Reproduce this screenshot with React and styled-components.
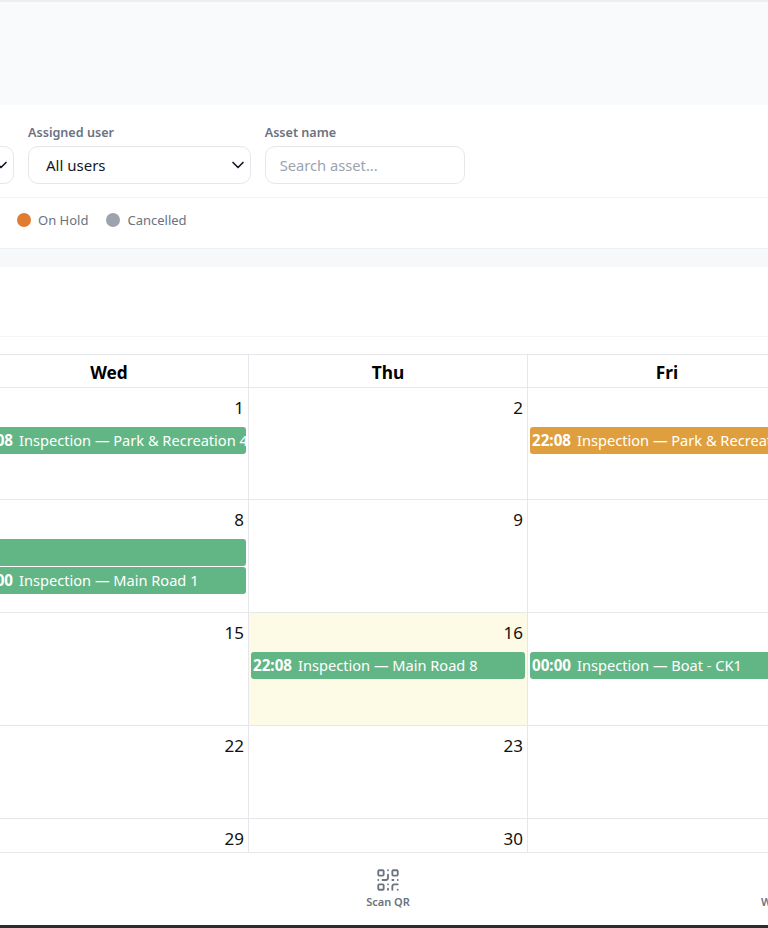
import React from 'react'
import styled, { createGlobalStyle } from 'styled-components'
import { ChevronDown, QrCode } from 'lucide-react'

const GlobalStyle = createGlobalStyle`
  html, body {
    margin: 0;
    height: 100%;
    overflow: hidden;
    background: #fff;
    font-family: "Noto Sans", "Open Sans", sans-serif;
  }
`

const COLUMN = 279

const Page = styled.div`
  width: 768px;
  height: 928px;
  overflow: hidden;
  display: flex;
  flex-direction: column;
  border-top: 2px solid #eceef1;
  border-bottom: 3px solid #2a2c30;
  box-sizing: border-box;
  background: #fff;
`

const Banner = styled.div`
  height: 103px;
  flex: none;
  background: #f9fafb;
`

const FilterCard = styled.section`
  flex: none;
  height: 144px;
  box-sizing: border-box;
  background: #fff;
  border-bottom: 1px solid #eef0f2;
  box-shadow: 0 1px 2px rgba(0, 0, 0, 0.05);
  display: flex;
  flex-direction: column;
`

const FilterRow = styled.div`
  height: 93px;
  flex: none;
  box-sizing: border-box;
  padding-top: 19px;
  display: flex;
  gap: 14px;
  border-bottom: 1px solid #f3f4f6;
`

const Field = styled.label`
  display: flex;
  flex-direction: column;
  gap: 5px;
  flex: none;
  width: ${p => p.$width}px;
  margin-left: ${p => p.$offset || 0}px;
`

const FieldLabel = styled.span`
  font-size: 12.6px;
  line-height: 17px;
  height: 17px;
  font-weight: 600;
  color: #6b7280;
  white-space: nowrap;
`

const Control = styled.div`
  height: 38px;
  box-sizing: border-box;
  border: 1px solid #e5e7eb;
  border-radius: 10px;
  background: #fff;
  display: flex;
  align-items: center;
  justify-content: space-between;
  padding: 0 2px 0 17px;
  font-size: 15px;
  color: #111827;
  svg {
    flex: none;
    color: #111827;
  }
`

const SearchInput = styled.input`
  height: 38px;
  width: 100%;
  box-sizing: border-box;
  border: 1px solid #e5e7eb;
  border-radius: 10px;
  background: #fff;
  padding: 0 14px;
  font: inherit;
  font-size: 14.7px;
  outline: none;
  &::placeholder {
    color: #9ca3af;
  }
`

const Legend = styled.div`
  flex: 1;
  display: flex;
  align-items: center;
  padding-left: 17px;
  gap: 18px;
  padding-bottom: 6px;
`

const LegendItem = styled.span`
  display: flex;
  align-items: center;
  gap: 7px;
  font-size: 13px;
  color: #6b7280;
`

const Dot = styled.i`
  width: 14px;
  height: 14px;
  border-radius: 50%;
  background: ${p => p.$color};
`

const Gap = styled.div`
  height: 18px;
  flex: none;
  background: #f7f8fa;
`

const Toolbar = styled.div`
  height: 70px;
  flex: none;
  box-sizing: border-box;
  border-bottom: 1px solid #f3f4f6;
`

const Calendar = styled.div`
  flex: none;
  margin-top: 17px;
  margin-left: -30px;
  display: grid;
  grid-template-columns: repeat(3, ${COLUMN}px);
  border-top: 1px solid #e5e7eb;
`

const DayHead = styled.div`
  height: 33px;
  box-sizing: border-box;
  padding-top: 2px;
  display: flex;
  align-items: center;
  justify-content: center;
  border-right: 1px solid #e5e7eb;
  border-bottom: 1px solid #e5e7eb;
  font-size: 17.3px;
  font-weight: 700;
  color: #000;
`

const Day = styled.div`
  height: ${p => p.$height}px;
  box-sizing: border-box;
  border-right: 1px solid #e5e7eb;
  border-bottom: 1px solid #e5e7eb;
  background: ${p => (p.$today ? '#fdfae5' : '#fff')};
  overflow: hidden;
`

const DayNumber = styled.div`
  text-align: right;
  font-size: 17px;
  line-height: 24px;
  height: 24px;
  padding: 8px 4px 0 0;
  color: #111;
  margin-bottom: 7px;
`

const Event = styled.div`
  height: 27px;
  box-sizing: border-box;
  margin: 0 2px 1px;
  padding: 0 2px;
  border-radius: 3px;
  background: ${p => p.$color};
  color: #fff;
  font-size: 14.6px;
  line-height: 26px;
  white-space: nowrap;
  overflow: hidden;
  b {
    font-size: 15.2px;
    font-weight: 700;
    margin-right: 6px;
  }
`

const BottomNav = styled.nav`
  flex: 1;
  min-height: 0;
  background: #fff;
  display: grid;
  grid-template-columns: repeat(2, 407px);
  padding-left: 184.5px;
`

const NavItem = styled.a`
  display: flex;
  flex-direction: column;
  align-items: center;
  gap: 1px;
  padding-top: 14px;
  font-size: 11px;
  font-weight: 600;
  line-height: 15px;
  color: #6b7280;
  white-space: nowrap;
  svg {
    color: #6b7280;
  }
`

const GREEN = '#62b685'
const AMBER = '#e09f3e'

const weeks = [
  {
    height: 112.4,
    days: [
      { n: 1, events: [{ time: '22:08', title: 'Inspection — Park & Recreation 4', color: GREEN }] },
      { n: 2 },
      { n: 3, hideNumber: true, events: [{ time: '22:08', title: 'Inspection — Park & Recreation 4', color: AMBER }] },
    ],
  },
  {
    height: 112.4,
    days: [
      {
        n: 8,
        events: [
          { color: GREEN },
          { time: '00:00', title: 'Inspection — Main Road 1', color: GREEN },
        ],
      },
      { n: 9 },
      { n: 10, hideNumber: true },
    ],
  },
  {
    height: 113,
    days: [
      { n: 15 },
      { n: 16, today: true, events: [{ time: '22:08', title: 'Inspection — Main Road 8', color: GREEN }] },
      { n: 17, hideNumber: true, events: [{ time: '00:00', title: 'Inspection — Boat - CK1', color: GREEN }] },
    ],
  },
  { height: 93.6, days: [{ n: 22 }, { n: 23 }, { n: 24, hideNumber: true }] },
  { height: 34, days: [{ n: 29 }, { n: 30 }, { n: 31, hideNumber: true }] },
]

export default function App() {
  return (
    <Page>
      <GlobalStyle />
      <Banner />
      <FilterCard>
        <FilterRow>
          <Field $width={44} $offset={-30}>
            <FieldLabel />
            <Control>
              <span />
              <ChevronDown size={20} strokeWidth={2} />
            </Control>
          </Field>
          <Field $width={222.7}>
            <FieldLabel>Assigned user</FieldLabel>
            <Control>
              All users
              <ChevronDown size={20} strokeWidth={2} />
            </Control>
          </Field>
          <Field $width={200}>
            <FieldLabel>Asset name</FieldLabel>
            <SearchInput placeholder="Search asset..." />
          </Field>
        </FilterRow>
        <Legend>
          <LegendItem>
            <Dot $color="#e07b32" />
            On Hold
          </LegendItem>
          <LegendItem>
            <Dot $color="#9ca3af" />
            Cancelled
          </LegendItem>
        </Legend>
      </FilterCard>
      <Gap />
      <Toolbar />
      <Calendar>
        {['Wed', 'Thu', 'Fri'].map(d => (
          <DayHead key={d}>{d}</DayHead>
        ))}
        {weeks.map(week =>
          week.days.map(day => (
            <Day key={day.n} $height={week.height} $today={day.today}>
              <DayNumber>{day.hideNumber ? '' : day.n}</DayNumber>
              {(day.events || []).map((ev, i) => (
                <Event key={i} $color={ev.color}>
                  {ev.time && <b>{ev.time}</b>}
                  {ev.title}
                </Event>
              ))}
            </Day>
          ))
        )}
      </Calendar>
      <BottomNav>
        <NavItem>
          <QrCode size={26} strokeWidth={1.7} />
          Scan QR
        </NavItem>
        <NavItem>
          <QrCode size={26} strokeWidth={1.7} />
          Work Orders
        </NavItem>
      </BottomNav>
    </Page>
  )
}
